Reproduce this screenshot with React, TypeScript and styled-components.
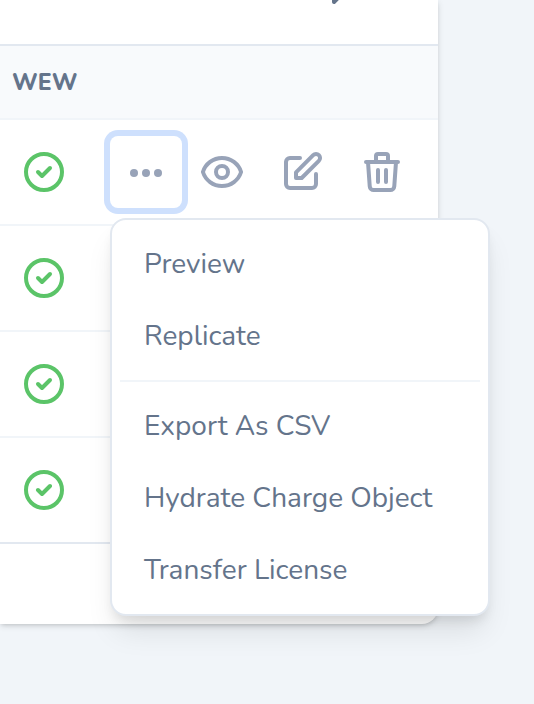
import React from "react";
import styled, { createGlobalStyle } from "styled-components";

const GlobalStyle = createGlobalStyle`
  *, *::before, *::after { box-sizing: border-box; }
  body {
    margin: 0;
    min-height: 100vh;
    background: #f1f5f9;
    color: #64748b;
    font-family: Nunito, Lato, sans-serif;
    font-size: 28px;
    overflow: hidden;
  }
`;

const Page = styled.main`
  padding-right: 96px;
`;

const Card = styled.section`
  background: #fff;
  border-radius: 0 0 16px 0;
  box-shadow: 0 2px 6px rgba(0, 0, 0, 0.12), 0 2px 4px -2px rgba(0, 0, 0, 0.16);
`;

const Toolbar = styled.div`
  display: flex;
  justify-content: flex-end;
  align-items: flex-end;
  height: 44px;
  padding: 0 82px 36px 0;
  overflow: hidden;
`;

const Table = styled.table`
  width: 100%;
  border-collapse: separate;
  border-spacing: 0;
  border-top: 2px solid #e2e8f0;
`;

const HeadCell = styled.th`
  height: 74px;
  padding: 2px 12px 0;
  background: #f8fafc;
  border-bottom: 2px solid #f1f5f9;
  font-size: 23px;
  font-weight: 800;
  line-height: 32px;
  text-align: left;
`;

const Cell = styled.td<{ $last?: boolean }>`
  height: 106px;
  padding: 0 0 0 20px;
  border-bottom: 2px solid ${(p) => (p.$last ? "#e2e8f0" : "#f1f5f9")};
`;

const Footer = styled.footer`
  height: 80px;
`;

const Actions = styled.div`
  display: flex;
  justify-content: flex-end;
  align-items: center;
  gap: 32px;
  padding-right: 32px;
`;

const Icon = styled.svg<{ $size?: number }>`
  display: block;
  flex: none;
  width: ${(p) => p.$size ?? 48}px;
  height: ${(p) => p.$size ?? 48}px;
  fill: none;
  stroke: currentColor;
  stroke-width: 2;
  stroke-linecap: round;
  stroke-linejoin: round;
`;

const SolidIcon = styled(Icon)`
  fill: currentColor;
  stroke: none;
`;

const CheckIcon = styled(Icon)`
  color: #5bc468;
`;

const IconButton = styled.button`
  flex: none;
  padding: 0;
  border: 0;
  background: none;
  color: #98a3b8;
  cursor: pointer;
`;

const FilterButton = styled(IconButton)`
  color: #64748b;
`;

const MenuAnchor = styled.div`
  position: relative;
  margin-right: -16px;
`;

const MenuButton = styled(IconButton)`
  display: grid;
  place-items: center;
  width: 72px;
  height: 72px;
  padding-top: 2px;
  border-radius: 8px;
  background: #fff;
  box-shadow: 0 0 0 6px #cee0fd;
`;

const Menu = styled.div`
  position: absolute;
  z-index: 1;
  top: 82px;
  left: 0;
  min-width: 380px;
  padding: 8px;
  border: 2px solid #e2e8f0;
  border-radius: 16px;
  background: #fff;
  box-shadow: 0 20px 30px -6px rgba(0, 0, 0, 0.1), 0 8px 12px -4px rgba(0, 0, 0, 0.1);
`;

const MenuItem = styled.button`
  display: block;
  width: 100%;
  padding: 16px 24px;
  border: 0;
  background: none;
  color: inherit;
  font: inherit;
  line-height: 40px;
  text-align: left;
  white-space: nowrap;
  cursor: pointer;
`;

const Divider = styled.hr`
  height: 2px;
  margin: 8px 0;
  border: 0;
  background: #f1f5f9;
`;

const rows = [1, 2, 3, 4];

function ActionMenu() {
  return (
    <Menu role="menu" aria-label="Row actions">
      <MenuItem role="menuitem">Preview</MenuItem>
      <MenuItem role="menuitem">Replicate</MenuItem>
      <Divider />
      <MenuItem role="menuitem">Export As CSV</MenuItem>
      <MenuItem role="menuitem">Hydrate Charge Object</MenuItem>
      <MenuItem role="menuitem">Transfer License</MenuItem>
    </Menu>
  );
}

function RowActions() {
  return (
    <Actions>
      <MenuAnchor>
        <MenuButton aria-label="More actions" aria-haspopup="menu" aria-expanded="true">
          <SolidIcon $size={40} viewBox="0 0 20 20">
            <circle cx="4" cy="10" r="2" />
            <circle cx="10" cy="10" r="2" />
            <circle cx="16" cy="10" r="2" />
          </SolidIcon>
        </MenuButton>
        <ActionMenu />
      </MenuAnchor>
      <IconButton aria-label="View">
        <Icon viewBox="0 0 24 24">
          <path d="M15 12a3 3 0 11-6 0 3 3 0 016 0z" />
          <path d="M2.458 12C3.732 7.943 7.523 5 12 5c4.478 0 8.268 2.943 9.542 7-1.274 4.057-5.064 7-9.542 7-4.477 0-8.268-2.943-9.542-7z" />
        </Icon>
      </IconButton>
      <IconButton aria-label="Edit">
        <Icon viewBox="0 0 24 24">
          <path d="M11 5H6a2 2 0 00-2 2v11a2 2 0 002 2h11a2 2 0 002-2v-5m-1.414-9.414a2 2 0 112.828 2.828L11.828 15H9v-2.828l8.586-8.586z" />
        </Icon>
      </IconButton>
      <IconButton aria-label="Delete">
        <Icon viewBox="0 0 24 24">
          <path d="M19 7l-.867 12.142A2 2 0 0116.138 21H7.862a2 2 0 01-1.995-1.858L5 7m5 4v6m4-6v6m1-10V4a1 1 0 00-1-1h-4a1 1 0 00-1 1v3M4 7h16" />
        </Icon>
      </IconButton>
    </Actions>
  );
}

export default function App() {
  return (
    <Page>
      <GlobalStyle />
      <Card>
        <Toolbar>
          <FilterButton aria-label="Filter">
            <SolidIcon $size={40} viewBox="0 0 20 20">
              <path d="M3 3a1 1 0 011-1h12a1 1 0 011 1v3a1 1 0 01-.293.707L12 11.414V15a1 1 0 01-.293.707l-2 2A1 1 0 018 17v-5.586L3.293 6.707A1 1 0 013 6V3z" />
            </SolidIcon>
          </FilterButton>
        </Toolbar>
        <Table>
          <thead>
            <tr>
              <HeadCell scope="col">WEW</HeadCell>
              <HeadCell as="td" />
            </tr>
          </thead>
          <tbody>
            {rows.map((row, index) => (
              <tr key={row}>
                <Cell $last={index === rows.length - 1}>
                  <CheckIcon viewBox="0 0 24 24" role="img" aria-label="Yes">
                    <path d="M9 12l2 2 4-4m6 2a9 9 0 11-18 0 9 9 0 0118 0z" />
                  </CheckIcon>
                </Cell>
                <Cell $last={index === rows.length - 1}>{index === 0 && <RowActions />}</Cell>
              </tr>
            ))}
          </tbody>
        </Table>
        <Footer />
      </Card>
    </Page>
  );
}
